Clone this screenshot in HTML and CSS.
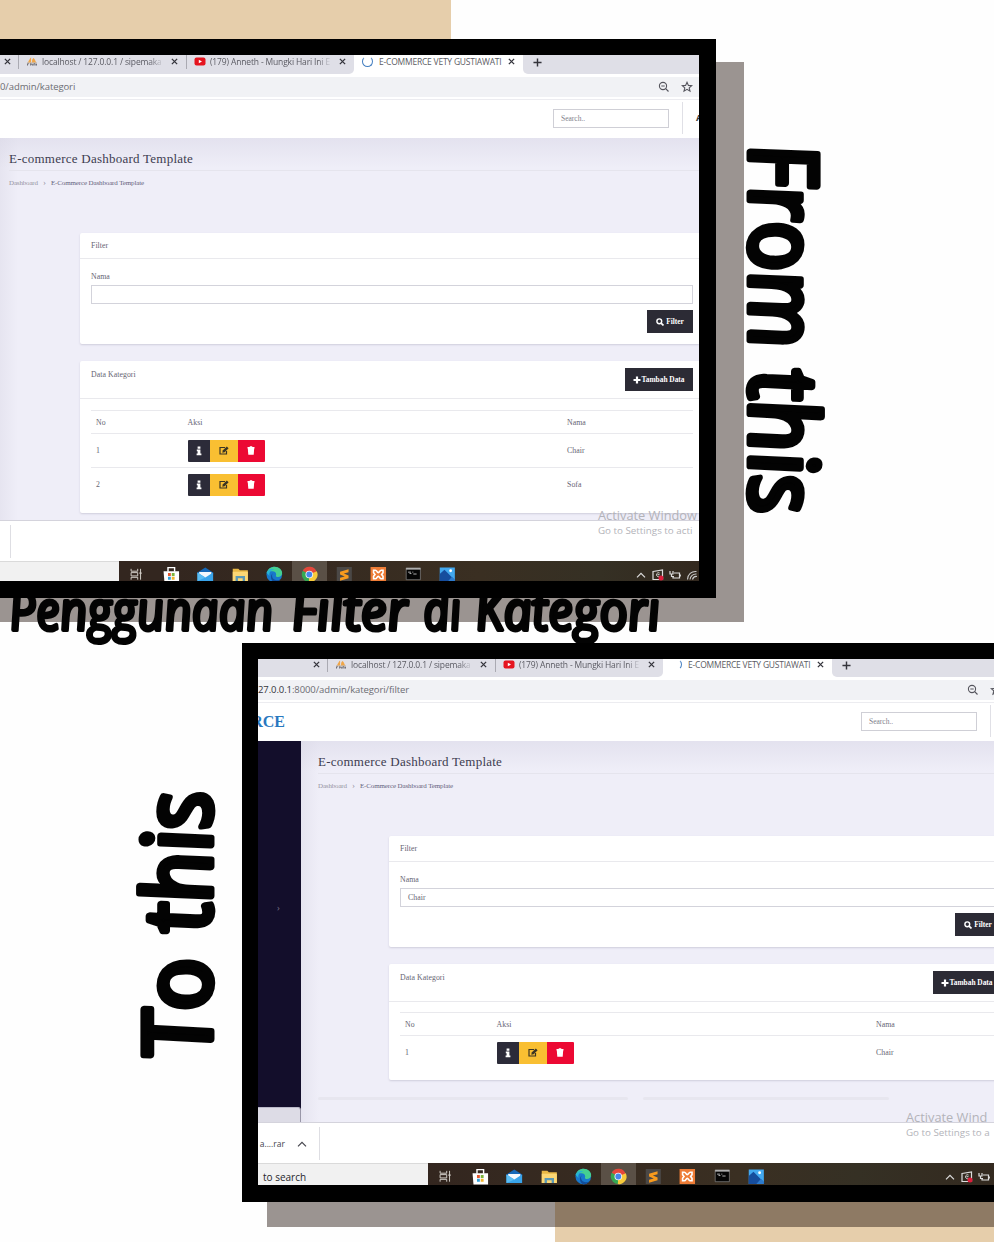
FILE: index.html
```html
<!DOCTYPE html>
<html lang="id">
<head>
<meta charset="utf-8">
<title>Penggunaan Filter di Kategori</title>
<link rel="stylesheet" href="styles.css">
</head>
<body>
<svg class="sprites" aria-hidden="true">
  <symbol id="i-x" viewBox="0 0 8 8"><path d="M1 1l6 6M7 1L1 7" stroke="#33333b" stroke-width="1.5"/></symbol>
  <symbol id="i-plus" viewBox="0 0 10 10"><path d="M5 .5v9M.5 5h9" stroke="#33333b" stroke-width="1.6"/></symbol>
  <symbol id="i-pma" viewBox="0 0 12 10"><path d="M1.5 6C3 3 4 1 5 .5V6zM6 6c0-3 .5-4 1.500-5C9 2 10 4 10.500 6z" fill="#f0a648"/><path d="M.5 6.500h11" stroke="#bda58a" stroke-width=".8"/><path d="M1 9.500v-2h1.500M4.500 7v2.500M4.500 8h2V9.500M8 9.500v-2h1.500v2M11 7.500v2" stroke="#65656d" fill="none"/></symbol>
  <symbol id="i-yt" viewBox="0 0 12 9"><rect x=".5" y=".5" width="11" height="8" rx="2" fill="#e5141f"/><path d="M4.800 2.700v3.600L8 4.500z" fill="#fff"/></symbol>
  <symbol id="i-zoom" viewBox="0 0 12 12"><circle cx="5" cy="5" r="3.600" fill="none" stroke="#55555d" stroke-width="1.100"/><path d="M7.700 7.700L10.500 10.500M3.300 5h3.400" stroke="#55555d" stroke-width="1.200"/></symbol>
  <symbol id="i-star" viewBox="0 0 12 12"><path d="M6 1.300l1.400 3.100 3.300.3-2.500 2.200.8 3.300L6 8.400l-3 1.800.8-3.300L1.300 4.700l3.300-.3z" fill="none" stroke="#55555d" stroke-width="1.100"/></symbol>
  <symbol id="i-info" viewBox="0 0 8 10"><path d="M2.600.5h2.800v2.300H2.600zM1.800 3.600h3.600v4h1V9.300H1.600V7.600h1V5.200h-.8z" fill="#fff"/></symbol>
  <symbol id="i-edit" viewBox="0 0 10 9"><path d="M6 1.500H1v6.500h6.500V5" fill="none" stroke="#3b3524" stroke-width="1.200"/><path d="M3.300 6.700l.4-2.300L7.800.4l1.800 1.800-4 4z" fill="#3b3524"/></symbol>
  <symbol id="i-trash" viewBox="0 0 8 9"><path d="M.5 1h2L3 .3h2L5.500 1h2v1.400h-7zM.8 2.400h6.400l-.5 6.400H1.300z" fill="#fff"/></symbol>
  <symbol id="i-search" viewBox="0 0 9 9"><circle cx="3.700" cy="3.700" r="2.700" fill="none" stroke="#fff" stroke-width="1.600"/><path d="M5.700 5.700l2.700 2.700" stroke="#fff" stroke-width="1.900"/></symbol>
  <symbol id="i-add" viewBox="0 0 8 8"><path d="M4 .5v7M.5 4h7" stroke="#fff" stroke-width="2.200"/></symbol>
  <symbol id="i-task" viewBox="0 0 18 18"><path d="M3.500 3v2.500h7V3M3.500 14.500V12h7v2.500M3.500 7h7v3.500h-7zM13.500 3v11.500M12 7.500h3" fill="none" stroke="#d9d5cf"/></symbol>
  <symbol id="i-store" viewBox="0 0 18 18"><path d="M5.500 6V1.700h7V6" fill="none" stroke="#fff" stroke-width="1.500"/><path d="M.8 5.500h16.400v12H1.800z" fill="#fff"/><path d="M5.500 7.500h3v3h-3z" fill="#e4572e"/><path d="M9.500 7.500h3v3h-3z" fill="#7db53c"/><path d="M5.500 11.500h3v3h-3z" fill="#2f9fd8"/><path d="M9.500 11.500h3v3h-3z" fill="#f3b52c"/></symbol>
  <symbol id="i-mail" viewBox="0 0 18 18"><path d="M.7 7L9 1.500 17.300 7v2H.7z" fill="#1669b8"/><path d="M2.500 6.300h13V13h-13z" fill="#f4f9fd"/><path d="M.7 7L9 12.200 17.300 7v9H.7z" fill="#39a4ea"/><path d="M.7 7L9 12.200.7 16z" fill="#5bbdf3"/></symbol>
  <symbol id="i-folder" viewBox="0 0 18 18"><path d="M1 3h6l1.500 1.500H17V16H1z" fill="#e9b846"/><path d="M1 6h16v10H1z" fill="#fbd775"/><path d="M4 16v-5.500h10V16h-2.500v-3h-5v3z" fill="#5b99b5"/></symbol>
  <symbol id="i-edge" viewBox="0 0 18 18"><circle cx="9" cy="9" r="8.300" fill="#1878cc"/><path d="M.9 7.500C2 3 5.500.7 9.300.7c5 0 8 3.500 8 6.600 0 2.700-2 4.300-4.500 4.300-1.500 0-2.300-.6-2-1.300.8-2-.4-4.500-3.300-4.700C4.500 5.400 2 6 .9 7.500z" fill="#45cf91"/><path d="M.9 7.500C2.500 3.500 6 2.500 9 3.700c-3.500.5-6 3-5 7z" fill="#25b3d6"/><path d="M7.500 7.600c-1.500 1.600-1.200 5 1.500 6.700 1.800 1.100 4 1 6.200-.1-1.500 2.200-3.700 3.200-6 3.200C5.300 16 4 10 7.500 7.600z" fill="#124e9c"/></symbol>
  <symbol id="i-chrome" viewBox="0 0 18 18"><circle cx="9" cy="9" r="8" fill="#35a853"/><path d="M9 9L2.100 5A8 8 0 0 1 16.900 7z" fill="#e4473b"/><path d="M9 9l7.900-3.500A8 8 0 0 1 8.500 17z" fill="#f7ca3b"/><circle cx="9" cy="9" r="4" fill="#f5f5f5"/><circle cx="9" cy="9" r="3.100" fill="#4686ea"/></symbol>
  <symbol id="i-sublime" viewBox="0 0 18 18"><path d="M1 1h16v16H1z" fill="#4b4846"/><path d="M13.500 3.500v3L8.500 8l5 2v3l-9 2.500v-3l5-1.500-5-2V6z" fill="#f89a1d"/></symbol>
  <symbol id="i-xampp" viewBox="0 0 18 18"><path d="M.8 1h16.400v16H.8z" fill="#ee7c36"/><path d="M4 4.500h2c1.500 0 1.500 2.500 3 2.500s1.500-2.500 3-2.500h2v2.700L12.500 9l1.500 1.800v2.700h-2c-1.500 0-1.500-2.500-3-2.500s-1.500 2.500-3 2.500H4v-2.700L5.500 9 4 7.200z" fill="none" stroke="#fff" stroke-width="1.700"/></symbol>
  <symbol id="i-cmd" viewBox="0 0 18 18"><path d="M1.500 2h15v12.500h-15z" fill="#050505" stroke="#8d8d8d" stroke-width=".7"/><path d="M1.500 3h15" stroke="#ddd" stroke-width="1.500"/><path d="M3.500 6.500h3M8 6.500h1M5 8h2M9 8.500h3.500" stroke="#bbb"/></symbol>
  <symbol id="i-photos" viewBox="0 0 18 18"><path d="M1 1.500h16V17H1z" fill="#42a8ef"/><path d="M1 17V8.500L6 4l11 11v2z" fill="#164d9d"/><path d="M9 17l5-5.500 3 3V17z" fill="#2d7bcd"/><circle cx="12.500" cy="5" r="1.500" fill="#fff"/></symbol>
  <symbol id="i-up" viewBox="0 0 12 12"><path d="M2 8.300L6 4.300l4 4" fill="none" stroke="currentColor" stroke-width="1.200"/></symbol>
  <symbol id="i-cast" viewBox="0 0 12 12"><path d="M1 2.500L10.500 1v9.500H1z" fill="none" stroke="#ddd" stroke-width="1.200"/><path d="M7.500 4a2 2 0 1 0 0 3.500M5.500 5.700h2" fill="none" stroke="#ddd"/><circle cx="9" cy="9" r="2.500" fill="#df1c3b"/></symbol>
  <symbol id="i-batt" viewBox="0 0 12 12"><path d="M5 4h5.500v5H4V7M1 2v3h3V2M2.500 5v2.500H5M11.300 5.500v2" fill="none" stroke="#ddd" stroke-width="1.200"/></symbol>
  <symbol id="i-wifi" viewBox="0 0 12 12"><path d="M1.500 10.500a8 8 0 0 1 9-8M4 10.500a6 6 0 0 1 6.500-5.500M6.500 10.500A4 4 0 0 1 11 7.500" fill="none" stroke="#ccc" stroke-width="1.100"/></symbol>
</svg>

<main class="collage">
  <div class="sand sand-top"></div>
  <div class="sand sand-bottom"></div>
  <div class="shade shade-first"></div>
  <div class="shade shade-second"></div>

  <svg class="lettering" viewBox="0 0 994 1242">
    <g class="marker heading">
      <text transform="translate(11 630) skewX(7)" textLength="264" lengthAdjust="spacingAndGlyphs">Penggunaan</text>
      <text transform="translate(293 630) skewX(7)" textLength="117" lengthAdjust="spacingAndGlyphs">Filter</text>
      <text transform="translate(425 630) skewX(7)" textLength="38" lengthAdjust="spacingAndGlyphs">di</text>
      <text transform="translate(477 630) skewX(7)" textLength="185" lengthAdjust="spacingAndGlyphs">Kategori</text>
    </g>
    <g class="marker side">
      <text transform="translate(750 148) rotate(90) skewX(9)" textLength="204" lengthAdjust="spacingAndGlyphs">From</text>
      <text transform="translate(750 374) rotate(90) skewX(9)" textLength="144" lengthAdjust="spacingAndGlyphs">this</text>
      <text transform="translate(211 1054) rotate(-90) skewX(9)" textLength="100" lengthAdjust="spacingAndGlyphs">To</text>
      <text transform="translate(211 928) rotate(-90) skewX(9)" textLength="141" lengthAdjust="spacingAndGlyphs">this</text>
    </g>
  </svg>

  <section class="frame frame-first">
    <div class="screen">
      <div class="tabs">
        <div class="tab tab-a"><svg><use href="#i-x"/></svg></div>
        <div class="tab tab-b"><svg class="fav"><use href="#i-pma"/></svg><span class="fade">localhost / 127.0.0.1 / sipemaka</span><svg><use href="#i-x"/></svg></div>
        <div class="tab tab-c"><svg class="fav"><use href="#i-yt"/></svg><span class="fade">(179) Anneth - Mungki Hari Ini E</span><svg><use href="#i-x"/></svg></div>
        <div class="tab tab-active"><i class="spinner"></i><span>E-COMMERCE VETY GUSTIAWATI</span><svg><use href="#i-x"/></svg></div>
        <div class="newtab"><svg><use href="#i-plus"/></svg></div>
      </div>
      <div class="address"><div class="omnibox"><span class="url">0/admin/kategori</span><svg><use href="#i-zoom"/></svg><svg><use href="#i-star"/></svg></div></div>
      <header class="topbar"><strong class="brand"></strong><div class="search">Search..</div><div class="user"><span>A</span></div></header>
      <div class="page">
        <aside class="sidebar"></aside>
        <div class="content">
          <h1>E-commerce Dashboard Template</h1>
          <nav class="crumbs"><span>Dashboard</span><i>›</i><span class="here">E-Commerce Dashboard Template</span></nav>
          <div class="cards">
            <section class="card filter">
              <h2>Filter</h2>
              <label>Nama</label>
              <div class="field"></div>
              <button class="btn"><svg><use href="#i-search"/></svg>Filter</button>
            </section>
            <section class="card data">
              <div class="card-head"><h2>Data Kategori</h2><button class="btn add"><svg><use href="#i-add"/></svg>Tambah Data</button></div>
              <div class="table">
                <div class="row head"><span>No</span><span>Aksi</span><span>Nama</span></div>
                <div class="row"><span>1</span><span class="actions"><i class="info"><svg><use href="#i-info"/></svg></i><i class="edit"><svg><use href="#i-edit"/></svg></i><i class="del"><svg><use href="#i-trash"/></svg></i></span><span>Chair</span></div>
                <div class="row"><span>2</span><span class="actions"><i class="info"><svg><use href="#i-info"/></svg></i><i class="edit"><svg><use href="#i-edit"/></svg></i><i class="del"><svg><use href="#i-trash"/></svg></i></span><span>Sofa</span></div>
              </div>
            </section>
          </div>
        </div>
      </div>
      <div class="downloads"><div class="file"></div></div>
      <div class="taskbar">
        <div class="winsearch"></div>
        <div class="apps"><svg><use href="#i-task"/></svg><svg><use href="#i-store"/></svg><svg><use href="#i-mail"/></svg><svg><use href="#i-folder"/></svg><svg><use href="#i-edge"/></svg><svg class="open"><use href="#i-chrome"/></svg><svg><use href="#i-sublime"/></svg><svg><use href="#i-xampp"/></svg><svg><use href="#i-cmd"/></svg><svg><use href="#i-photos"/></svg></div>
        <div class="tray"><svg><use href="#i-up"/></svg><svg><use href="#i-cast"/></svg><svg><use href="#i-batt"/></svg><svg><use href="#i-wifi"/></svg></div>
      </div>
      <div class="watermark"><p>Activate Window</p><small>Go to Settings to acti</small></div>
    </div>
  </section>

  <section class="frame frame-second">
    <div class="screen">
      <div class="tabs">
        <div class="tab tab-a"><svg><use href="#i-x"/></svg></div>
        <div class="tab tab-b"><svg class="fav"><use href="#i-pma"/></svg><span class="fade">localhost / 127.0.0.1 / sipemaka</span><svg><use href="#i-x"/></svg></div>
        <div class="tab tab-c"><svg class="fav"><use href="#i-yt"/></svg><span class="fade">(179) Anneth - Mungki Hari Ini E</span><svg><use href="#i-x"/></svg></div>
        <div class="tab tab-active"><i class="spinner short"></i><span>E-COMMERCE VETY GUSTIAWATI</span><svg><use href="#i-x"/></svg></div>
        <div class="newtab"><svg><use href="#i-plus"/></svg></div>
      </div>
      <div class="address"><div class="omnibox"><span class="url"><b>27.0.0.1</b>:8000/admin/kategori/filter</span><svg><use href="#i-zoom"/></svg><svg><use href="#i-star"/></svg></div></div>
      <header class="topbar"><strong class="brand">RCE</strong><div class="search">Search..</div><div class="user"></div></header>
      <div class="page">
        <aside class="sidebar"><span class="caret">›</span><div class="status"></div></aside>
        <div class="content">
          <h1>E-commerce Dashboard Template</h1>
          <nav class="crumbs"><span>Dashboard</span><i>›</i><span class="here">E-Commerce Dashboard Template</span></nav>
          <div class="cards">
            <section class="card filter">
              <h2>Filter</h2>
              <label>Nama</label>
              <div class="field">Chair</div>
              <button class="btn"><svg><use href="#i-search"/></svg>Filter</button>
            </section>
            <section class="card data">
              <div class="card-head"><h2>Data Kategori</h2><button class="btn add"><svg><use href="#i-add"/></svg>Tambah Data</button></div>
              <div class="table">
                <div class="row head"><span>No</span><span>Aksi</span><span>Nama</span></div>
                <div class="row"><span>1</span><span class="actions"><i class="info"><svg><use href="#i-info"/></svg></i><i class="edit"><svg><use href="#i-edit"/></svg></i><i class="del"><svg><use href="#i-trash"/></svg></i></span><span>Chair</span></div>
              </div>
            </section>
          </div>
          <div class="footer-lines"><i></i><i></i></div>
        </div>
      </div>
      <div class="downloads"><div class="file"><span>a....rar</span><svg><use href="#i-up"/></svg></div></div>
      <div class="taskbar">
        <div class="winsearch">to search</div>
        <div class="apps"><svg><use href="#i-task"/></svg><svg><use href="#i-store"/></svg><svg><use href="#i-mail"/></svg><svg><use href="#i-folder"/></svg><svg><use href="#i-edge"/></svg><svg class="open"><use href="#i-chrome"/></svg><svg><use href="#i-sublime"/></svg><svg><use href="#i-xampp"/></svg><svg><use href="#i-cmd"/></svg><svg><use href="#i-photos"/></svg></div>
        <div class="tray"><svg><use href="#i-up"/></svg><svg><use href="#i-cast"/></svg><svg><use href="#i-batt"/></svg></div>
      </div>
      <div class="watermark"><p>Activate Wind</p><small>Go to Settings to a</small></div>
    </div>
  </section>
</main>
</body>
</html>
```

FILE: styles.css
```css
* { box-sizing: border-box; }
body, h1, h2, p { margin: 0; }
body { background: #fff; }
svg { flex: none; display: block; }
i { font-style: normal; }
.sprites { position: absolute; width: 0; height: 0; }

/* Collage pieces */
.collage { position: relative; width: 994px; height: 1242px; overflow: hidden; background: #fefefe; }
.sand, .shade, .frame, .lettering { position: absolute; }
.sand { background: #e6ceab; }
.sand-top { left: 0; top: 0; width: 451px; height: 60px; }
.sand-bottom { left: 555px; top: 1150px; width: 439px; height: 92px; }
.shade { background: #24140d; opacity: .45; }
.shade-first { left: 0; top: 62px; width: 744px; height: 560px; }
.shade-second { left: 267px; top: 700px; width: 727px; height: 527px; }
.lettering { inset: 0; width: 994px; height: 1242px; }
.marker { font-family: "Open Sans", "Noto Sans", sans-serif; font-style: italic; font-weight: 400; fill: #030303; stroke: #030303; stroke-linejoin: round; stroke-linecap: round; }
.heading { font-size: 54px; stroke-width: 4px; }
.side { font-size: 94px; stroke-width: 7px; }
.frame { overflow: hidden; border: 16px solid #000; display: flex; }
.frame-first { left: -17px; top: 39px; width: 733px; height: 559px; border-width: 16px 17px 17px; justify-content: flex-end; }
.frame-second { left: 242px; top: 643px; width: 768px; height: 559px; border-width: 16px 0 17px 16px; }
.screen { position: relative; flex: none; width: 750px; height: 526px; display: flex; flex-direction: column; background: #fff; font-family: "Liberation Serif", serif; color: #666473; }
.frame-first .screen { width: 699px; }
.frame-second .screen { margin-top: -1px; height: 527px; }

/* Browser chrome */
.tabs { height: 19px; display: flex; background: #fff; font: 8.5px/14px "Open Sans", "Noto Sans", sans-serif; letter-spacing: -.15px; color: #5b5b63; }
.tab, .newtab { display: flex; align-items: flex-start; background: #dfdfe7; white-space: nowrap; }
.tab svg { width: 7px; height: 7px; margin-top: 3px; }
.tab-a { width: 69px; padding-left: 55px; }
.frame-first .tab-a { width: 18px; padding-left: 4px; }
.tab-b { width: 168px; padding-left: 8px; }
.tab-c { width: 168px; padding-left: 8px; border-bottom-right-radius: 5px; }
.tab-b, .tab-c { background: linear-gradient(#aaaab2, #aaaab2) 0 0 / 1px 14px no-repeat #dfdfe7; }
.tab .fav { width: 12px; height: 9px; margin: 2px 4px 0 0; }
.fade { width: 122px; margin-right: 7px; -webkit-mask-image: linear-gradient(90deg, #000 88%, transparent); mask-image: linear-gradient(90deg, #000 88%, transparent); }
.tab-active { width: 169px; padding-left: 8px; background: #fff; }
.tab-active span { width: 124px; margin: 0 5px 0 6px; letter-spacing: -.22px; }
.spinner { width: 11px; height: 11px; margin-top: 1px; border: 1.5px solid #447fc1; border-top-color: transparent; border-radius: 50%; }
.spinner.short { border-color: transparent #447fc1 transparent transparent; }
.newtab { flex: 1; padding: 3px 0 0 10px; border-bottom-left-radius: 5px; }
.newtab svg { width: 9px; height: 9px; }
.address { height: 26px; padding: 3px 0; border-bottom: 1px solid #ececf0; }
.omnibox { height: 20px; display: flex; align-items: center; background: #f1f2f5; font: 9.5px/20px "Open Sans", "Noto Sans", sans-serif; color: #6c6c73; }
.url { flex: none; width: 709px; letter-spacing: -.09px; }
.frame-first .url { width: 658px; }
.url b { font-weight: 400; color: #35353c; }
.omnibox svg { width: 12px; height: 12px; margin-right: 11px; }

/* Dashboard */
.topbar { height: 38px; display: flex; align-items: center; }
.brand { flex: none; width: 27px; margin: -1px 576px 0 0; display: flex; justify-content: flex-end; font-size: 16px; line-height: 18px; white-space: nowrap; color: #2878bf; }
.frame-first .brand { width: 0; margin-right: 553px; }
.search { flex: none; width: 116px; height: 19px; border: 1px solid #cfcfd6; padding-left: 7px; font-size: 7.5px; line-height: 17px; margin-top: -1px; color: #81818b; }
.user { flex: none; margin: -2px 0 0 13px; height: 32px; border-left: 1px solid #e0e0e6; padding: 10px 0 0 13px; font: bold 9px/12px "Open Sans", sans-serif; color: #333; }
.page { flex: 1; min-height: 0; display: flex; background: #efeef8; border-bottom: 1px solid #d4d3dc; overflow: hidden; }
.sidebar { width: 43px; flex: none; background: #130e2b; display: flex; flex-direction: column; justify-content: flex-end; }
.frame-first .sidebar { width: 0; }
.caret { margin: auto 0 auto 19px; font: 9px/10px "Open Sans", sans-serif; color: #777487; padding-bottom: 32px; }
.status { height: 15px; background: #dddce6; border-top: 1px solid #bbb9c9; border-right: 1px solid #9997a8; border-top-right-radius: 3px; }
.content { flex: 1; min-width: 0; padding: 12px 0 0 17px; background: linear-gradient(#d8d6e580, #dcdbe900 30px), linear-gradient(90deg, #dddbe880, #dddbe800 18px); }
.frame-first .content { padding-left: 9px; }
h1 { height: 21px; font-weight: 400; font-size: 13px; line-height: 17px; letter-spacing: .24px; color: #3d3c50; border-bottom: 1px solid #e5e4ed; }
.crumbs { margin-top: 8px; height: 9px; display: flex; font-size: 7px; line-height: 9px; letter-spacing: -.16px; color: #9694a2; white-space: nowrap; }
.crumbs i { width: 13px; text-align: center; font-size: 9px; line-height: 7px; }
.crumbs .here { color: #65637c; letter-spacing: -.13px; }
.cards { width: 618px; margin: 45px 0 0 71px; display: flex; flex-direction: column; gap: 17px; }
.frame-first .cards { width: 619px; }
.card { background: #fff; padding: 0 6px 0 11px; border-radius: 2px 0 0 2px; box-shadow: 0 1px 2px #cfcddc; font-size: 7.8px; letter-spacing: .06px; }
.card h2 { font-size: 7.8px; font-weight: 400; line-height: 25px; }
.filter { height: 111px; display: flex; flex-direction: column; }
.filter h2 { height: 26px; margin: 0 -6px 0 -11px; padding-left: 11px; border-bottom: 1px solid #e9e9ed; }
.filter label { margin-top: 11px; height: 15px; line-height: 13px; }
.field { height: 19px; border: 1px solid #d3d3db; padding-left: 7px; line-height: 17px; }
.btn { align-self: flex-end; margin-top: 6px; width: 46px; height: 23px; flex: none; padding: 0; border: 0; background: #2c2b35; color: #fff; font: bold 7.4px/23px "Liberation Serif", serif; display: flex; justify-content: center; align-items: center; gap: 2px; }
.btn svg { width: 8px; height: 8px; }
.card-head { height: 38px; margin: 0 -6px 0 -11px; padding: 0 6px 0 11px; display: flex; justify-content: space-between; border-bottom: 1px solid #e9e9ed; }
.card-head h2 { line-height: 27px; }
.btn.add { width: 68px; align-self: flex-start; margin-top: 7px; gap: 0; }
.table { margin-top: 11px; padding-bottom: 11px; }
.row { height: 34.3px; display: grid; grid-template-columns: 91.5px 379.5px 1fr; align-items: center; padding-left: 5px; border-top: 1px solid #e9e9ed; }
.row.head { height: 23px; }
.actions { display: flex; height: 22px; border-radius: 1px; overflow: hidden; width: 77px; }
.actions i { display: flex; align-items: center; justify-content: center; }
.info { width: 22px; background: #2c2b39; }
.edit { width: 28px; background: #f9bf32; }
.del { width: 27px; background: #ec0933; }
.info svg { width: 8px; height: 10px; }
.edit svg { width: 10px; height: 9px; }
.del svg { width: 8px; height: 9px; }
.frame-second .table { margin-top: 10px; }
.footer-lines { margin-top: 17px; display: flex; gap: 15px; }
.footer-lines i { width: 246px; height: 3px; background: #e7e6ef; border-radius: 2px; }
.footer-lines i:first-child { width: 310px; }

/* Desktop strip */
.downloads { height: 40px; flex: none; padding: 4px 0; background: #fff; }
.file { width: 62px; height: 33px; border-right: 1px solid #dedee3; display: flex; align-items: center; justify-content: flex-end; padding-right: 11px; font: 8.5px/12px "Open Sans", sans-serif; color: #45454d; white-space: nowrap; }
.frame-first .file { width: 11px; padding: 0; }
.file svg { width: 12px; height: 12px; margin-left: 11px; }
.taskbar { height: 20px; flex: none; display: flex; background: linear-gradient(90deg, #33261f 170px, #3a2f22 480px, #353024 600px, #33291f); }
.frame-second .taskbar { height: 22px; }
.winsearch { width: 170px; flex: none; padding: 3px 0 0 5px; border-top: 1px solid #dadada; background: #f1f1f1; font: 10px/20px "Open Sans", sans-serif; color: #26262a; }
.frame-first .winsearch { width: 119px; }
.apps { flex: none; width: 346px; display: grid; grid-template-columns: repeat(10, 34.6px); overflow: hidden; }
.apps svg { width: 34.6px; height: 22px; padding: 5px 8px 0; overflow: hidden; }
.apps .open { background: #5a5046; }
.tray { margin-left: 170px; padding-top: 8px; display: flex; gap: 5px; color: #ddd; }
.tray svg { width: 12px; height: 12px; }
.watermark { position: absolute; left: 598px; top: 452px; color: #b3b3b9; white-space: nowrap; font-family: "Open Sans", "Noto Sans", sans-serif; }
.frame-second .watermark { left: 648px; top: 451px; }
.watermark p { font-size: 12.8px; line-height: 17px; }
.watermark small { display: block; font-size: 9.8px; line-height: 14px; }
```
